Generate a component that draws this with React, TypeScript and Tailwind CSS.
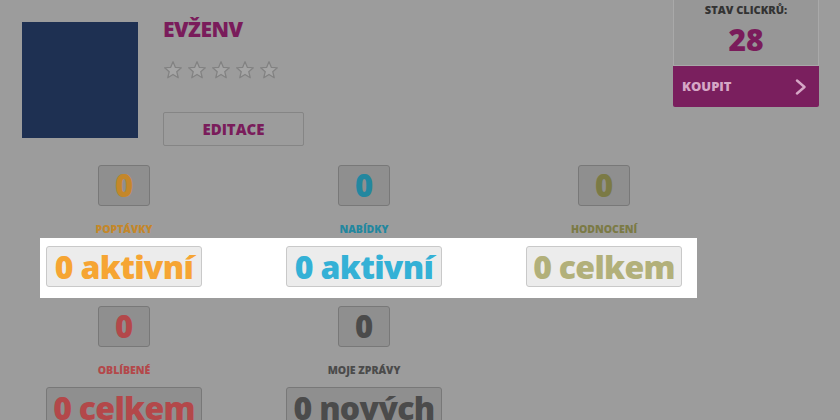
import React from "react";

type Stat = {
  label: string;
  count: number;
  pill: string;
  dim: string;
  bright: string;
};

const topStats: Stat[] = [
  { label: "Poptávky", count: 0, pill: "0 aktivní", dim: "text-[#c4872a]", bright: "text-[#f6a533]" },
  { label: "Nabídky", count: 0, pill: "0 aktivní", dim: "text-[#23879f]", bright: "text-[#34b1d6]" },
  { label: "Hodnocení", count: 0, pill: "0 celkem", dim: "text-[#7b7a45]", bright: "text-[#b2b07a]" },
];

const bottomStats: Stat[] = [
  { label: "Oblíbené", count: 0, pill: "0 celkem", dim: "text-[#b3484a]", bright: "text-[#b3484a]" },
  { label: "Moje zprávy", count: 0, pill: "0 nových", dim: "text-[#4b4b4b]", bright: "text-[#4b4b4b]" },
];

function Star() {
  return (
    <svg width="20" height="20" viewBox="0 0 24 24">
      <polygon
        points="12,2 14.9,8.9 22,9.3 16.5,14 18.3,21.3 12,17.3 5.7,21.3 7.5,14 2,9.3 9.1,8.9"
        fill="#a5a5a5"
        stroke="#828282"
        strokeWidth="1.5"
        strokeLinejoin="round"
      />
    </svg>
  );
}

function CountHeads({ stats }: { stats: Stat[] }) {
  return (
    <div className="ml-[4px] grid w-[720px] grid-cols-3">
      {stats.map((s) => (
        <div key={s.label} className="flex flex-col items-center">
          <div
            className={`flex h-[41px] w-[52px] items-center justify-center rounded-[3px] border border-[#787878] bg-[#8f8f8f] text-[31px] leading-none font-extrabold ${s.dim}`}
          >
            {s.count}
          </div>
          <span className={`mt-[17px] text-[10.5px] leading-[12px] font-extrabold uppercase ${s.dim}`}>
            {s.label}
          </span>
        </div>
      ))}
    </div>
  );
}

function Pills({ stats, lit }: { stats: Stat[]; lit?: boolean }) {
  return (
    <div className="relative ml-[4px] grid w-[720px] grid-cols-3">
      {lit && <div className="absolute -top-[8px] -bottom-[11px] left-[36px] right-[27px] bg-white" />}
      {stats.map((s) => (
        <div key={s.label} className="relative flex justify-center">
          <div
            className={`flex h-[41px] w-[156px] items-center justify-center rounded-[3px] border text-[32px] leading-none font-extrabold tracking-[-0.7px] ${
              lit ? `border-[#c9c9c9] bg-[#ececec] ${s.bright}` : `border-[#787878] bg-[#8f8f8f] ${s.dim}`
            }`}
          >
            {s.pill}
          </div>
        </div>
      ))}
    </div>
  );
}

export default function App() {
  return (
    <div className="h-[420px] w-[840px] overflow-hidden bg-[#9c9c9c] font-['Open_Sans',sans-serif]">
      <div className="flex h-[146px]">
        <div className="mt-[22px] ml-[22px] h-[116px] w-[116px] bg-[#1e3052]" />
        <div className="mt-[17px] ml-[25px] flex flex-col">
          <h1 className="text-[21px] leading-[24px] font-extrabold tracking-[-0.5px] text-[#7a1c5b]">EVŽENV</h1>
          <div className="mt-[19px] flex gap-[4px]">
            <Star />
            <Star />
            <Star />
            <Star />
            <Star />
          </div>
          <button className="mt-[32px] h-[34px] w-[141px] rounded-[2px] border border-[#858585] text-[15px] font-extrabold text-[#7a1c5b]">
            EDITACE
          </button>
        </div>
        <div className="mr-[21px] ml-auto flex h-[107px] w-[146px] flex-col">
          <div className="flex flex-1 flex-col items-center border border-t-0 border-[#a9a9a9] bg-[#979797]">
            <span className="mt-[3px] text-[11px] leading-[14px] font-extrabold text-[#333333]">STAV CLICKRŮ:</span>
            <span className="mt-[6px] text-[30px] leading-[34px] font-extrabold text-[#7a1c5b]">28</span>
          </div>
          <div className="flex h-[41px] items-center justify-between rounded-b-[2px] bg-[#7a1f5e] pr-[12px] pl-[9px]">
            <span className="text-[13px] font-extrabold text-[#d6a7c6]">KOUPIT</span>
            <svg width="12" height="16" viewBox="0 0 12 16" fill="none">
              <polyline points="2,1.5 9.5,8 2,14.5" stroke="#d6a7c6" strokeWidth="2.4" strokeLinecap="round" strokeLinejoin="round" />
            </svg>
          </div>
        </div>
      </div>

      <div className="mt-[19px]">
        <CountHeads stats={topStats} />
        <div className="mt-[11px]">
          <Pills stats={topStats} lit />
        </div>
      </div>

      <div className="mt-[19px]">
        <CountHeads stats={bottomStats} />
        <div className="mt-[11px]">
          <Pills stats={bottomStats} />
        </div>
      </div>
    </div>
  );
}
